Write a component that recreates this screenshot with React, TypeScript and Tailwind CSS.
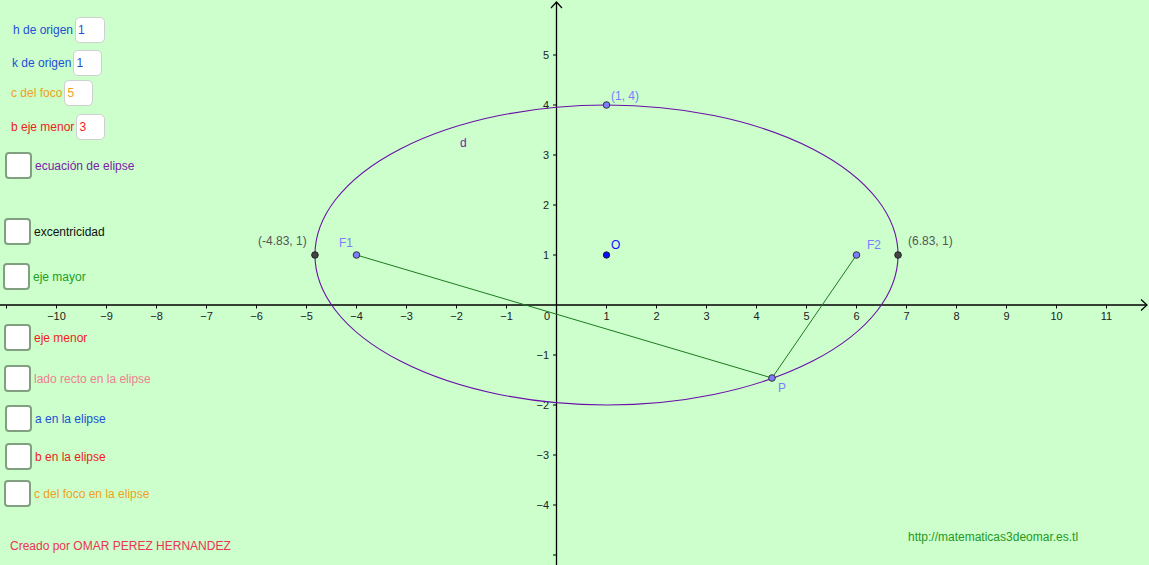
import React from "react";

const OX = 556.5;
const OY = 305;
const U = 50;
const px = (x: number) => OX + x * U;
const py = (y: number) => OY - y * U;

function Graph() {
  const xs: number[] = [];
  for (let i = -11; i <= 11; i++) if (i !== 0) xs.push(i);
  const ys = [5, 4, 3, 2, 1, -1, -2, -3, -4, -5];
  const a = Math.sqrt(34);
  const P = { x: px(4.31), y: py(-1.46) };
  const F1 = { x: px(-4), y: py(1) };
  const F2 = { x: px(6), y: py(1) };
  const lbl = "#7d7dff";
  return (
    <svg
      className="absolute inset-0"
      width={1149}
      height={565}
      viewBox="0 0 1149 565"
      style={{ fontFamily: '"Liberation Sans", Arial, sans-serif' }}
    >
      {/* axes */}
      <line x1={0} y1={OY} x2={1147} y2={OY} stroke="#000" strokeWidth={1.3} />
      <polyline points={`1141,299.5 1147,305 1141,310.5`} fill="none" stroke="#000" strokeWidth={1.2} />
      <line x1={OX} y1={2} x2={OX} y2={565} stroke="#000" strokeWidth={1.3} />
      <polyline points={`551,8 556.5,2 562,8`} fill="none" stroke="#000" strokeWidth={1.2} />
      {xs.map((i) => (
        <line key={"xt" + i} x1={px(i)} y1={OY} x2={px(i)} y2={OY + 3.5} stroke="#000" strokeWidth={1} />
      ))}
      {ys.map((j) => (
        <line key={"yt" + j} x1={OX - 3.5} y1={py(j)} x2={OX} y2={py(j)} stroke="#000" strokeWidth={1} />
      ))}
      {xs
        .filter((i) => i >= -10)
        .map((i) => (
          <text key={"xl" + i} x={px(i)} y={320} fontSize={11} fill="#222" textAnchor="middle">
            {i < 0 ? "\u2212" + Math.abs(i) : String(i)}
          </text>
        ))}
      <text x={547} y={320} fontSize={11} fill="#222" textAnchor="middle">
        0
      </text>
      {ys
        .filter((j) => j !== -5)
        .map((j) => (
          <text key={"yl" + j} x={549} y={py(j) + 4} fontSize={11} fill="#222" textAnchor="end">
            {j < 0 ? "\u2212" + Math.abs(j) : String(j)}
          </text>
        ))}

      {/* ellipse */}
      <ellipse cx={px(1)} cy={py(1)} rx={a * U} ry={3 * U} fill="none" stroke="#6a10a8" strokeWidth={1.1} />

      {/* segments */}
      <line x1={F1.x} y1={F1.y} x2={P.x} y2={P.y} stroke="#1d7a1d" strokeWidth={1} />
      <line x1={F2.x} y1={F2.y} x2={P.x} y2={P.y} stroke="#1d7a1d" strokeWidth={1} />

      {/* points */}
      <circle cx={px(1)} cy={py(4)} r={3.3} fill="#7d7dff" stroke="#333" strokeWidth={1} />
      <circle cx={F1.x} cy={F1.y} r={3.3} fill="#7d7dff" stroke="#333" strokeWidth={1} />
      <circle cx={F2.x} cy={F2.y} r={3.3} fill="#7d7dff" stroke="#333" strokeWidth={1} />
      <circle cx={P.x} cy={P.y} r={3.3} fill="#7d7dff" stroke="#333" strokeWidth={1} />
      <circle cx={px(1)} cy={py(1)} r={3.2} fill="#0a0aff" stroke="#222" strokeWidth={1} />
      <circle cx={px(1 - a)} cy={py(1)} r={3.3} fill="#444" stroke="#222" strokeWidth={1} />
      <circle cx={px(1 + a)} cy={py(1)} r={3.3} fill="#444" stroke="#222" strokeWidth={1} />

      {/* labels */}
      <text x={611} y={100} fontSize={12} fill={lbl}>(1, 4)</text>
      <text x={460} y={147} fontSize={12} fill="#7b22a8">d</text>
      <text x={611} y={249} fontSize={12} fill="#1010ff">O</text>
      <text x={339} y={247} fontSize={12} fill={lbl}>F1</text>
      <text x={867} y={249} fontSize={12} fill={lbl}>F2</text>
      <text x={778} y={392} fontSize={12} fill={lbl}>P</text>
      <text x={258} y={245} fontSize={12} fill="#555">(-4.83, 1)</text>
      <text x={908} y={245} fontSize={12} fill="#555">(6.83, 1)</text>
    </svg>
  );
}

function InputRow({
  label,
  value,
  color,
  ml,
  mt,
  w,
}: {
  label: string;
  value: string;
  color: string;
  ml: string;
  mt: string;
  w: string;
}) {
  return (
    <div className={`flex items-center gap-[2px] h-[26px] ${ml} ${mt}`}>
      <span className={`text-[12px] leading-none ${color}`}>{label}</span>
      <div
        className={`h-[26px] ${w} bg-white border border-[#cfcfcf] rounded-[5px] flex items-center pl-[2px] text-[12px] ${color}`}
      >
        {value}
      </div>
    </div>
  );
}

function CheckRow({
  label,
  color,
  ml,
  mt,
}: {
  label: string;
  color: string;
  ml: string;
  mt: string;
}) {
  return (
    <div className={`flex items-center gap-[3px] h-[27px] ${ml} ${mt}`}>
      <div className="w-[27px] h-[27px] bg-white border-2 border-[#80a080] rounded-[4px] shrink-0" />
      <span className={`text-[12px] leading-none ${color}`}>{label}</span>
    </div>
  );
}

export default function App() {
  return (
    <div
      className="relative w-[1149px] h-[565px] bg-[#ccffcc] overflow-hidden"
      style={{ fontFamily: '"Liberation Sans", Arial, sans-serif' }}
    >
      <Graph />
      <div className="relative flex flex-col items-start">
        <InputRow label="h de origen" value="1" color="text-[#2350d4]" ml="ml-[13px]" mt="mt-[17px]" w="w-[30px]" />
        <InputRow label="k de origen" value="1" color="text-[#2350d4]" ml="ml-[12px]" mt="mt-[7px]" w="w-[29px]" />
        <InputRow label="c del foco" value="5" color="text-[#f0a020]" ml="ml-[11px]" mt="mt-[4px]" w="w-[29px]" />
        <InputRow label="b eje menor" value="3" color="text-[#f01c1c]" ml="ml-[11px]" mt="mt-[8px]" w="w-[29px]" />
        <CheckRow label="ecuación de elipse" color="text-[#7b22a8]" ml="ml-[5px]" mt="mt-[12px]" />
        <CheckRow label="excentricidad" color="text-[#111111]" ml="ml-[4px]" mt="mt-[39px]" />
        <CheckRow label="eje mayor" color="text-[#22a022]" ml="ml-[3px]" mt="mt-[18px]" />
        <CheckRow label="eje menor" color="text-[#f01c1c]" ml="ml-[4px]" mt="mt-[34px]" />
        <CheckRow label="lado recto en la elipse" color="text-[#f08090]" ml="ml-[4px]" mt="mt-[14px]" />
        <CheckRow label="a en la elipse" color="text-[#2350d4]" ml="ml-[5px]" mt="mt-[13px]" />
        <CheckRow label="b en la elipse" color="text-[#f01c1c]" ml="ml-[5px]" mt="mt-[11px]" />
        <CheckRow label="c del foco en la elipse" color="text-[#f0a020]" ml="ml-[4px]" mt="mt-[10px]" />
        <div className="w-full flex items-start mt-[23px]">
          <span className="ml-[908px] text-[12px] leading-[14px] text-[#1e9a1e]">http://matematicas3deomar.es.tl</span>
        </div>
        <span className="ml-[10px] mt-[-5px] text-[12px] leading-[14px] text-[#ee3355]">Creado por OMAR PEREZ HERNANDEZ</span>
      </div>
    </div>
  );
}
